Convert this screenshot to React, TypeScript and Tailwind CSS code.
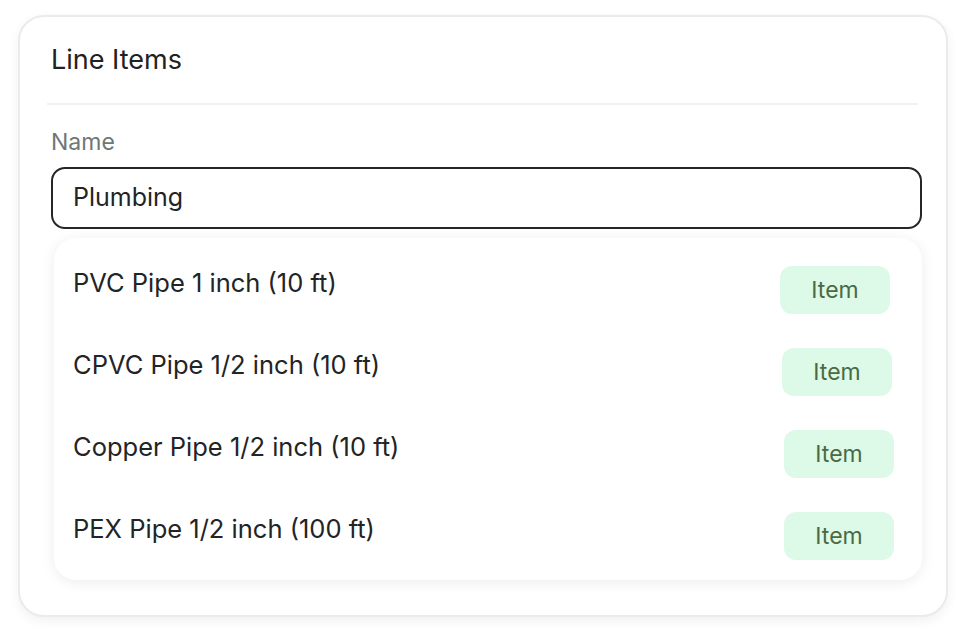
const items = [
  { name: "PVC Pipe 1 inch (10 ft)", shift: "mr-[32px]" },
  { name: "CPVC Pipe 1/2 inch (10 ft)", shift: "mr-[30px]" },
  { name: "Copper Pipe 1/2 inch (10 ft)", shift: "mr-[28px]" },
  { name: "PEX Pipe 1/2 inch (100 ft)", shift: "mr-[28px]" },
];

const App = () => {
  return (
    <div
      className="w-[964px] h-[636px] bg-white pt-[15px] pl-[18px]"
      style={{ fontFamily: "Inter, 'Noto Sans', sans-serif" }}
    >
      <div className="w-[930px] h-[602px] rounded-[26px] border-2 border-[#ebebeb] bg-white shadow-[0_4px_12px_rgba(0,0,0,0.06)] pl-[27px] pr-[28px] pt-[27px]">
        <h2 className="text-[27px] leading-[32px] text-[#1f2222] font-normal pl-[4px]">Line Items</h2>
        <div className="mt-[27px] h-[2px] bg-[#f1f1f1]" />
        <label className="block mt-[24px] pl-[4px] text-[23px] leading-[26px] text-[#6e7777]">Name</label>
        <div className="mt-[12px] ml-[4px] mr-[-4px] h-[62px] rounded-[14px] border-2 border-[#24262a] flex items-center pl-[20px] text-[25px] text-[#222425]">
          Plumbing
        </div>
        <div className="mt-[9px] ml-[7px] mr-[-4px] h-[342px] rounded-[22px] bg-white shadow-[0_2px_14px_rgba(0,0,0,0.08)] pt-[28px]">
          {items.map((it) => (
            <div key={it.name} className="h-[82px] flex items-start justify-between pl-[19px]">
              <span className="text-[25.5px] leading-[30px] text-[#222425] mt-[2px]">{it.name}</span>
              <span
                className={`w-[110px] h-[48px] rounded-[12px] bg-[#ddf9e7] text-[#4a6a44] text-[23px] flex items-center justify-center ${it.shift}`}
              >
                Item
              </span>
            </div>
          ))}
        </div>
      </div>
    </div>
  );
};

export default App;
